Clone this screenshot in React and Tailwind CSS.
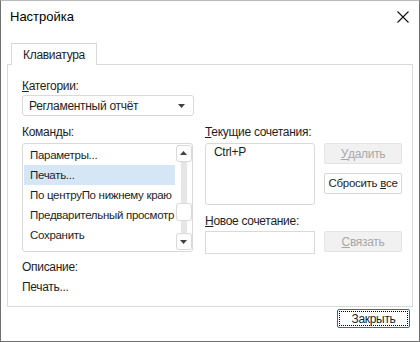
import React from "react";

const font = { fontFamily: '"Liberation Sans", Arial, sans-serif' };

function Caret({ up = false }) {
  return (
    <svg width="7" height="4" viewBox="0 0 7 4" aria-hidden="true">
      {up ? <path d="M0 4L3.5 0L7 4Z" fill="#404040" /> : <path d="M0 0L7 0L3.5 4Z" fill="#404040" />}
    </svg>
  );
}

function Btn({ children, disabled = false, focused = false, small = false }) {
  if (focused) {
    return (
      <button className="w-[73px] h-[19px] rounded-[2px] border border-[#0078d7] bg-white p-[1px] text-[12px] text-[#1e1e1e]">
        <span className="flex h-full w-full items-center justify-center border border-dotted border-black leading-none">
          {children}
        </span>
      </button>
    );
  }
  return (
    <button
      className={`shrink-0 w-[78px] h-[21px] rounded-[2px] border leading-none flex items-center justify-center whitespace-nowrap ${
        small ? "text-[11.5px]" : "text-[12px]"
      } ${disabled ? "border-[#e3e3e3] bg-[#f1f1f1] text-[#a8a8a8]" : "border-[#d6d6d6] bg-white text-[#1e1e1e]"}`}
    >
      {children}
    </button>
  );
}

const commands = ["Параметры...", "Печать...", "По центруПо нижнему краю", "Предварительный просмотр", "Сохранить"];

export default function App() {
  return (
    <div style={font} className="w-[420px] h-[342px] bg-white border border-[#707070] border-t-[#bcbcbc] flex flex-col text-[#1e1e1e] text-[12px] tracking-[-0.3px]">
      <div className="flex items-center justify-between h-[31px] pl-[9px] pr-[10px]">
        <span className="text-[13px] text-black tracking-normal">Настройка</span>
        <svg width="12" height="12" viewBox="0 0 12 12" aria-hidden="true">
          <path d="M0.5 0.5L11.5 11.5M11.5 0.5L0.5 11.5" stroke="#111" strokeWidth="1.1" />
        </svg>
      </div>

      <div className="pl-[10px] pt-[11px] flex">
        <div className="w-[86px] h-[22px] border border-b-0 border-[#d9d9d9] bg-white flex items-center justify-center -mb-[1px] relative z-10">
          Клавиатура
        </div>
      </div>

      <div className="mx-[6px] h-[243px] border border-[#d9d9d9] pl-[14px] pt-[13px] flex flex-col">
        <div className="h-[16px] leading-[16px]"><u>К</u>атегории:</div>
        <div className="mt-[1px] w-[172px] h-[21px] rounded-[3px] border border-[#d9d9d9] flex items-center justify-between pl-[6px] pr-[8px]">
          <span>Регламентный отчёт</span>
          <Caret />
        </div>

        <div className="mt-[8px] flex">
          <div className="w-[172px] shrink-0 flex flex-col">
            <div className="h-[16px] leading-[16px]">Команды:</div>
            <div className="mt-[3px] w-[171px] h-[109px] rounded-[3px] border border-[#d9d9d9] flex">
              <div className="flex-1 min-w-0 flex flex-col pt-[1px] pl-[1px]">
                {commands.map((c, i) => (
                  <div key={c} className={`h-[20px] leading-[20px] pl-[6px] whitespace-nowrap text-[11.5px] ${i === 1 ? "bg-[#d5e7f6]" : ""}`}>
                    {c}
                  </div>
                ))}
              </div>
              <div className="w-[17px] shrink-0 flex flex-col items-center py-[1px] relative">
                <div className="absolute top-[2px] bottom-[2px] w-[6px] bg-[#e6e6e6]" />
                <div className="relative w-[16px] h-[17px] rounded-[3px] border border-[#d9d9d9] bg-white flex items-center justify-center">
                  <Caret up />
                </div>
                <div className="relative mt-[41px] w-[16px] h-[19px] rounded-[3px] border border-[#d9d9d9] bg-white" />
                <div className="relative mt-[12px] w-[16px] h-[17px] rounded-[3px] border border-[#d9d9d9] bg-white flex items-center justify-center">
                  <Caret />
                </div>
              </div>
            </div>
          </div>

          <div className="ml-[11px] flex flex-col">
            <div className="h-[16px] leading-[16px]"><u>Т</u>екущие сочетания:</div>
            <div className="mt-[3px] flex gap-[9px]">
              <div className="shrink-0 w-[110px] h-[62px] rounded-[3px] border border-[#d9d9d9] pl-[8px] leading-[16px]">Ctrl+P</div>
              <div className="flex flex-col gap-[9px]">
                <Btn disabled><u>У</u>далить</Btn>
                <Btn small>Сбросить&nbsp;<u>в</u>се</Btn>
              </div>
            </div>
            <div className="mt-[8px] h-[16px] leading-[16px]"><u>Н</u>овое сочетание:</div>
            <div className="mt-[2px] flex gap-[9px]">
              <div className="shrink-0 w-[110px] h-[23px] border border-[#d9d9d9]" />
              <Btn disabled><u>С</u>вязать</Btn>
            </div>
          </div>
        </div>

        <div className="mt-[5px] h-[16px] leading-[16px]">Описание:</div>
        <div className="mt-[4px] h-[16px] leading-[16px]">Печать...</div>
      </div>

      <div className="flex justify-end pr-[9px] pt-[2px]">
        <Btn focused>Закрыть</Btn>
      </div>
    </div>
  );
}
